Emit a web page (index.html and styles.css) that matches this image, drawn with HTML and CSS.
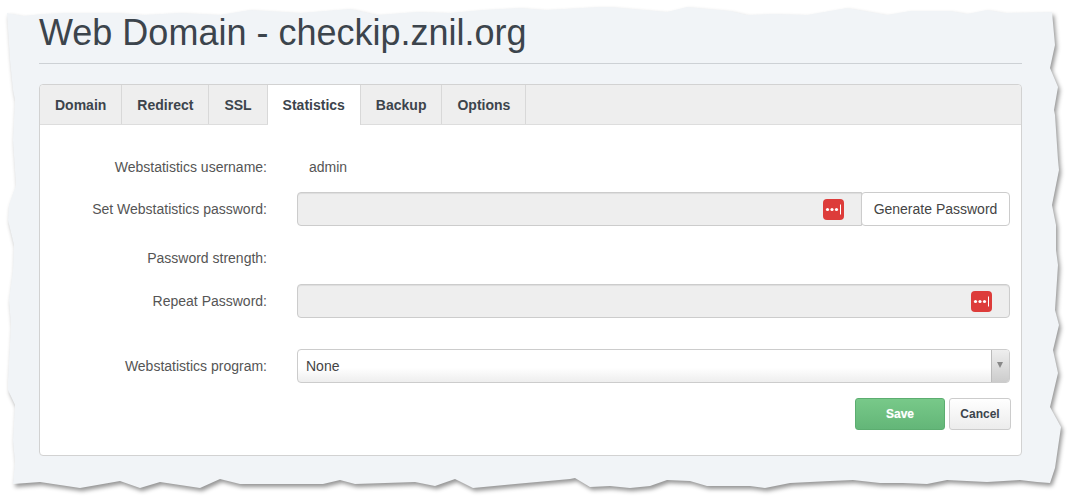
FILE: index.html
```html
<!DOCTYPE html>
<html lang="en">
<head>
    <meta charset="UTF-8">
    <title>Web Domain - checkip.znil.org</title>
    <link rel="stylesheet" href="styles.css">
</head>
<body>
    <!-- torn paper edge of the screenshot, sits behind the page -->
    <svg class="paper" width="1072" height="500" viewBox="0 0 1072 500">
        <polygon class="paper-shape" points="7,13 23,16 43,14 67,13 117,13 143,15 180,13 220,15 250,10 300,13 350,9 377,15 417,12 450,13 483,10 520,8 545,10 600,7 610,7 667,12 687,7 730,11 747,15 773,14 807,15 847,8 887,15 910,11 950,11 967,14 987,10 1005,13 1052,12 1055,45 1050,68 1058,87 1054,110 1055,115 1058,160 1059,170 1052,205 1056,225 1056,250 1058,265 1055,310 1059,325 1053,350 1058,373 1050,407 1061,427 1055,468 1050,483 1037,482 1020,480 987,482 947,480 927,484 903,483 880,483 853,480 830,481 790,483 765,488 750,486 707,486 690,481 667,480 650,486 630,488 610,486 590,487 575,478 570,479 515,484 473,488 455,479 435,486 415,482 355,484 340,480 323,484 290,484 240,484 220,479 200,488 160,482 140,488 120,481 80,488 40,482 13,484 15,462 13,440 15,405 8,390 8,380 11,325 9,300 13,270 14,245 8,220 9,205 16,185 13,140 15,100 13,90 10,60"/>
    </svg>

    <div class="page">
        <h1 class="title">Web Domain - checkip.znil.org</h1>
        <hr class="title-line">

        <div class="card">
            <div class="tabs">
                <div class="tab">Domain</div>
                <div class="tab">Redirect</div>
                <div class="tab">SSL</div>
                <div class="tab active">Statistics</div>
                <div class="tab">Backup</div>
                <div class="tab">Options</div>
            </div>

            <div class="tab-body">
                <div class="row gap-small">
                    <div class="label">Webstatistics username:</div>
                    <div class="value">admin</div>
                </div>

                <div class="row gap-normal">
                    <div class="label">Set Webstatistics password:</div>
                    <div class="field">
                        <div class="input-wrap">
                            <input class="input input-joined" type="password">
                            <svg class="lp-icon" width="21" height="21" viewBox="0 0 21 21">
                                <rect width="21" height="21" rx="4" fill="#dd3c3a"/>
                                <circle cx="4.5" cy="10.5" r="1.6" fill="#fff"/>
                                <circle cx="9" cy="10.5" r="1.6" fill="#fff"/>
                                <circle cx="13.5" cy="10.5" r="1.6" fill="#fff"/>
                                <rect x="17" y="5.5" width="1" height="10" fill="#fff"/>
                            </svg>
                        </div>
                        <button class="btn-generate" type="button">Generate Password</button>
                    </div>
                </div>

                <div class="row gap-medium">
                    <div class="label">Password strength:</div>
                </div>

                <div class="row gap-large">
                    <div class="label">Repeat Password:</div>
                    <div class="field">
                        <div class="input-wrap">
                            <input class="input" type="password">
                            <svg class="lp-icon" width="21" height="21" viewBox="0 0 21 21">
                                <rect width="21" height="21" rx="4" fill="#dd3c3a"/>
                                <circle cx="4.5" cy="10.5" r="1.6" fill="#fff"/>
                                <circle cx="9" cy="10.5" r="1.6" fill="#fff"/>
                                <circle cx="13.5" cy="10.5" r="1.6" fill="#fff"/>
                                <rect x="17" y="5.5" width="1" height="10" fill="#fff"/>
                            </svg>
                        </div>
                    </div>
                </div>

                <div class="row gap-normal">
                    <div class="label">Webstatistics program:</div>
                    <div class="field">
                        <div class="select">
                            <span class="select-text">None</span>
                            <span class="select-arrow"></span>
                        </div>
                    </div>
                </div>

                <div class="actions">
                    <button class="btn-save" type="button">Save</button>
                    <button class="btn-cancel" type="button">Cancel</button>
                </div>
            </div>
        </div>
    </div>
</body>
</html>
```

FILE: styles.css
```css
* {
    box-sizing: border-box;
}

body {
    margin: 0;
    width: 1072px;
    height: 500px;
    overflow: hidden;
    background: #fff;
    font-family: "Liberation Sans", Arial, sans-serif;
    font-size: 14px;
    color: #555;
}

.paper {
    position: absolute;
    left: 0;
    top: 0;
}

.paper-shape {
    fill: #f1f4f7;
    filter: drop-shadow(2px 3px 2px rgba(0, 0, 0, 0.42));
}

.page {
    position: relative;
    width: 983px;
    margin-left: 39px;
}

.title {
    margin: 0;
    padding-top: 13px;
    height: 63px;
    font-size: 36px;
    line-height: 40px;
    font-weight: normal;
    color: #3c444c;
}

.title-line {
    margin: 0 0 20px;
    border: none;
    border-top: 1px solid #cdd1d5;
}

.card {
    height: 372px;
    background: #fff;
    border: 1px solid #d2d2d2;
    border-radius: 4px;
}

.tabs {
    display: flex;
    height: 40px;
    background: #eee;
    border-bottom: 1px solid #ddd;
    border-radius: 4px 4px 0 0;
}

.tab {
    height: 39px;
    padding: 0 15px;
    line-height: 40px;
    font-weight: bold;
    color: #3c444c;
    border-right: 1px solid #d8d8d8;
}

.tab.active {
    height: 40px;
    background: #fff;
}

.tab-body {
    padding: 25px 11px 0 0;
}

.row {
    display: flex;
    align-items: center;
    min-height: 34px;
}

.gap-small {
    margin-bottom: 8px;
}

.gap-medium {
    margin-bottom: 9px;
}

.gap-normal {
    margin-bottom: 15px;
}

.gap-large {
    margin-bottom: 31px;
}

.label {
    width: 227px;
    text-align: right;
    flex: none;
}

.value {
    margin-left: 42px;
}

.field {
    display: flex;
    flex: 1;
    margin-left: 30px;
}

.input-wrap {
    position: relative;
    flex: 1;
}

.input {
    display: block;
    width: 100%;
    height: 34px;
    background: #eee;
    border: 1px solid #ccc;
    border-radius: 4px;
    box-shadow: inset 0 1px 1px rgba(0, 0, 0, 0.075);
}

.input-joined {
    border-radius: 4px 0 0 4px;
}

.lp-icon {
    position: absolute;
    right: 18px;
    top: 7px;
}

.btn-generate {
    position: relative;
    width: 149px;
    height: 34px;
    margin-left: -1px;
    padding: 0;
    background: #fff;
    border: 1px solid #ccc;
    border-radius: 4px;
    font-family: inherit;
    font-size: 14px;
    color: #444;
}

.select {
    display: flex;
    justify-content: space-between;
    flex: 1;
    height: 34px;
    background: linear-gradient(#fff 55%, #eee);
    border: 1px solid #ccc;
    border-radius: 4px;
}

.select-text {
    padding-left: 8px;
    line-height: 32px;
    color: #444;
}

.select-arrow {
    position: relative;
    width: 18px;
    background: linear-gradient(#eee, #ccc);
    border-left: 1px solid #bbb;
    border-radius: 0 3px 3px 0;
}

.select-arrow::after {
    content: "";
    position: absolute;
    left: 5px;
    top: 12px;
    border-left: 3.5px solid transparent;
    border-right: 3.5px solid transparent;
    border-top: 6px solid #888;
}

.actions {
    display: flex;
    justify-content: flex-end;
    margin-right: -1px;
    gap: 4px;
}

.btn-save,
.btn-cancel {
    height: 32px;
    padding: 0;
    border-radius: 3px;
    font-family: inherit;
    font-size: 12px;
    font-weight: bold;
}

.btn-save {
    width: 90px;
    background: linear-gradient(#78c989, #63b678);
    border: 1px solid #5cad70;
    color: #fff;
    text-shadow: 0 0 1px rgba(255, 255, 255, 0.5);
}

.btn-cancel {
    width: 62px;
    background: linear-gradient(#fff, #ececec);
    border: 1px solid #ccc;
    color: #3c444c;
}
```
